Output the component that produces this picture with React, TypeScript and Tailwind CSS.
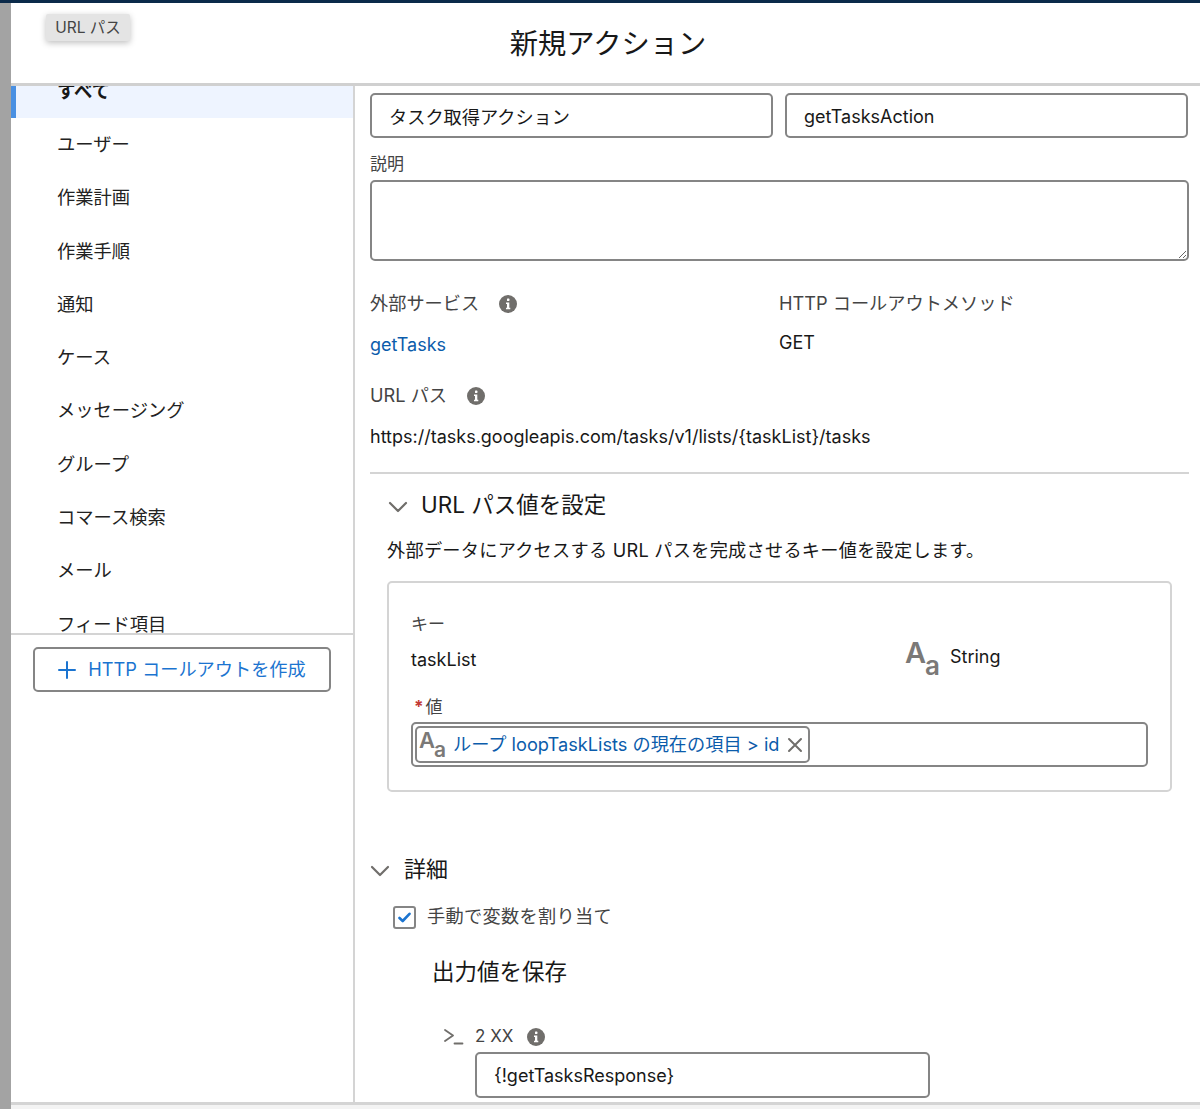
import React from 'react';

const FONT = 'font-["Inter","Noto_Sans_CJK_JP",sans-serif]';

const NAV_ITEMS = ['ユーザー', '作業計画', '作業手順', '通知', 'ケース', 'メッセージング', 'グループ', 'コマース検索', 'メール', 'フィード項目'];

function InfoIcon() {
  return (
    <svg width="18" height="18" viewBox="0 0 18 18" className="shrink-0">
      <circle cx="9" cy="9" r="9" fill="#706e6b" />
      <rect x="8" y="3.6" width="2.4" height="2.4" rx="0.6" fill="#fff" />
      <path d="M7 7.6h3.3v5.2h1v1.4H7v-1.4h1V9H7z" fill="#fff" />
    </svg>
  );
}

function Chevron() {
  return (
    <svg width="20" height="12" viewBox="0 0 20 12" fill="none" stroke="#706e6b" strokeWidth="2.2" strokeLinecap="round" strokeLinejoin="round" className="mt-[4px]">
      <path d="M2 2l8 8 8-8" />
    </svg>
  );
}

function TextTypeIcon({ large }: { large?: boolean }) {
  if (large) {
    return (
      <span className="w-[32px] h-[36px] shrink-0 flex items-start font-semibold text-[#7b7977]">
        <span className="text-[29px] leading-[28px]">A</span>
        <span className="text-[26px] leading-[28px] mt-[13px] -ml-[1px]">a</span>
      </span>
    );
  }
  return (
    <span className="w-[27px] h-[30px] shrink-0 flex items-start font-semibold text-[#7b7977]">
      <span className="text-[22px] leading-[21px]">A</span>
      <span className="text-[21px] leading-[21px] mt-[9px] -ml-[1px]">a</span>
    </span>
  );
}

function Sidebar() {
  return (
    <aside className="w-[344px] shrink-0 flex flex-col border-r-2 border-[#d4d4d4]">
      <div className="h-[547px] overflow-hidden">
        <div className="-mt-[21px] h-[53px] flex items-center pl-[46px] bg-[#eef4ff] border-l-[5px] border-[#4a90e2] font-bold text-[18.4px] text-[#181818]">
          <span className="-ml-[5px]">すべて</span>
        </div>
        {NAV_ITEMS.map(item => (
          <div key={item} className="h-[53.3px] flex items-center pl-[46px] text-[18.3px] text-[#222]">
            {item}
          </div>
        ))}
      </div>
      <div className="border-t-2 border-[#d4d4d4] px-[22px] pt-[12px]">
        <button className="w-[298px] h-[45px] flex items-center justify-center gap-[12px] rounded-[5px] border-2 border-[#858585] bg-white text-[18.2px] text-[#1b74d0]">
          <svg width="18" height="18" viewBox="0 0 18 18" stroke="#1b74d0" strokeWidth="2" strokeLinecap="round">
            <path d="M9 1v16M1 9h16" />
          </svg>
          HTTP コールアウトを作成
        </button>
      </div>
    </aside>
  );
}

function Content() {
  return (
    <main className="flex-1 min-w-0 overflow-hidden pl-[15px] pr-[11px] pt-[7px] text-[18.2px] text-[#181818]">
      <div className="grid grid-cols-[403px_403px] gap-[12px]">
        <input readOnly value="タスク取得アクション" className="h-[45px] rounded-[5px] border-2 border-[#858585] px-[17px] outline-none" />
        <input readOnly value="getTasksAction" className="h-[45px] rounded-[5px] border-2 border-[#858585] px-[17px] pt-[1px] text-[18px] outline-none" />
      </div>
      <label className="block mt-[14px] text-[17px] leading-[24px] text-[#444]">説明</label>
      <textarea readOnly className="block mt-[4px] w-full h-[81px] rounded-[5px] border-2 border-[#858585] resize-y outline-none" />

      <div className="grid grid-cols-[409px_1fr] mt-[29px]">
        <div>
          <div className="flex items-center gap-[20px] h-[28px] text-[#444]">
            外部サービス
            <InfoIcon />
          </div>
          <div className="mt-[13px] h-[28px] leading-[28px] text-[18px] text-[#0b5cab]">getTasks</div>
        </div>
        <div>
          <div className="h-[28px] flex items-center text-[#444]">HTTP コールアウトメソッド</div>
          <div className="mt-[11px] h-[28px] leading-[28px] text-[18px]">GET</div>
        </div>
      </div>

      <div className="flex items-center gap-[20px] h-[28px] mt-[23px] text-[#444]">
        URL パス
        <InfoIcon />
      </div>
      <div className="mt-[13px] h-[28px] leading-[28px] text-[18px]">https://tasks.googleapis.com/tasks/v1/lists/{'{taskList}'}/tasks</div>

      <div className="mt-[21px] border-t-2 border-[#d4d4d4] pl-[18px]">
        <div className="flex items-center gap-[13px] h-[34px] mt-[14px] text-[22.5px]">
          <Chevron />
          URL パス値を設定
        </div>
        <p className="mt-[15px] -ml-[1px] h-[26px] leading-[26px] tracking-[0.25px]">外部データにアクセスする URL パスを完成させるキー値を設定します。</p>
        <section className="mt-[18px] -ml-[1px] w-[785px] h-[211px] rounded-[5px] border-2 border-[#d4d4d4] px-[22px] pt-[29px]">
          <div className="text-[17px] leading-[24px] text-[#444]">キー</div>
          <div className="flex mt-[8px] h-[32px]">
            <div className="w-[494px] leading-[32px] text-[18px]">taskList</div>
            <div className="flex items-center gap-[13px] -mt-[6px] text-[18px]">
              <TextTypeIcon large />
              <span className="-mt-[2px]">String</span>
            </div>
          </div>
          <div className="mt-[19px] h-[24px] text-[17px] leading-[24px] text-[#444]">
            <span className="ml-[3px] mr-[2px] font-bold text-[#c23934]">*</span>値
          </div>
          <div className="mt-[3px] h-[45px] rounded-[5px] border-2 border-[#858585] flex items-center pl-[2px]">
            <span className="h-[37px] flex items-center gap-[7px] rounded-[5px] border-2 border-[#858585] pl-[2px] pr-[5px] text-[#0b5cab]">
              <TextTypeIcon />
              <span>ループ loopTaskLists の現在の項目 &gt; id</span>
              <svg width="16" height="16" viewBox="0 0 16 16" stroke="#706e6b" strokeWidth="2" strokeLinecap="round" className="ml-[1px]">
                <path d="M2 2l12 12M14 2L2 14" />
              </svg>
            </span>
          </div>
        </section>
      </div>

      <div className="flex items-center gap-[14px] h-[34px] mt-[60px] text-[22px]">
        <Chevron />
        詳細
      </div>
      <div className="flex items-center gap-[11px] mt-[19px] ml-[23px] h-[24px] tracking-[0.3px] text-[#444]">
        <span className="w-[23px] h-[23px] rounded-[3px] border-2 border-[#858585] flex items-center justify-center">
          <svg width="13" height="11" viewBox="0 0 13 11" fill="none" stroke="#1b74d0" strokeWidth="2.6" strokeLinecap="round" strokeLinejoin="round">
            <path d="M1.5 6l3.2 3L11.5 1.8" />
          </svg>
        </span>
        手動で変数を割り当て
      </div>
      <div className="mt-[26px] ml-[62px] h-[34px] leading-[34px] text-[22.5px]">出力値を保存</div>
      <div className="flex items-center mt-[36px] ml-[74px] h-[24px] text-[#444]">
        <svg width="20" height="16" viewBox="0 0 20 16" fill="none" stroke="#706e6b" strokeWidth="1.8" strokeLinecap="round" strokeLinejoin="round">
          <path d="M1 1l8 5.5-8 5.5M10.5 14.5h8" />
        </svg>
        <span className="ml-[11px] text-[17px]">2 XX</span>
        <span className="ml-[14px]"><InfoIcon /></span>
      </div>
      <input readOnly value="{!getTasksResponse}" className="block mt-[3px] ml-[105px] w-[455px] h-[46px] rounded-[5px] border-2 border-[#858585] px-[17px] text-[18px] outline-none" />
    </main>
  );
}

export default function App() {
  return (
    <div className={`relative w-[1200px] h-[1109px] overflow-hidden flex flex-col bg-white ${FONT}`}>
      <div className="h-[3px] shrink-0 bg-[#0b2a4a]" />
      <div className="flex flex-1 min-h-0">
        <div className="w-[11px] shrink-0 bg-[#a3a3a3]" />
        <div className="flex-1 min-w-0 flex flex-col">
          <header className="h-[83px] shrink-0 flex items-center justify-center pl-[5px] pt-[2px] border-b-[3px] border-[#d0d0d0] text-[28.3px] text-[#181818]">
            新規アクション
          </header>
          <div className="flex h-[1016px] shrink-0">
            <Sidebar />
            <Content />
          </div>
          <div className="flex-1 bg-[#f3f3f3] border-t-[3px] border-[#d4d4d4]" />
        </div>
      </div>
      {/* hover tooltip over the header */}
      <div className="absolute left-[46px] top-[14px] w-[84px] h-[27px] flex items-center justify-center rounded-[2px] bg-[#e4e4e4] text-[15.5px] text-[#444] shadow-[0_2px_6px_rgba(0,0,0,0.25)]">
        URL パス
      </div>
    </div>
  );
}
